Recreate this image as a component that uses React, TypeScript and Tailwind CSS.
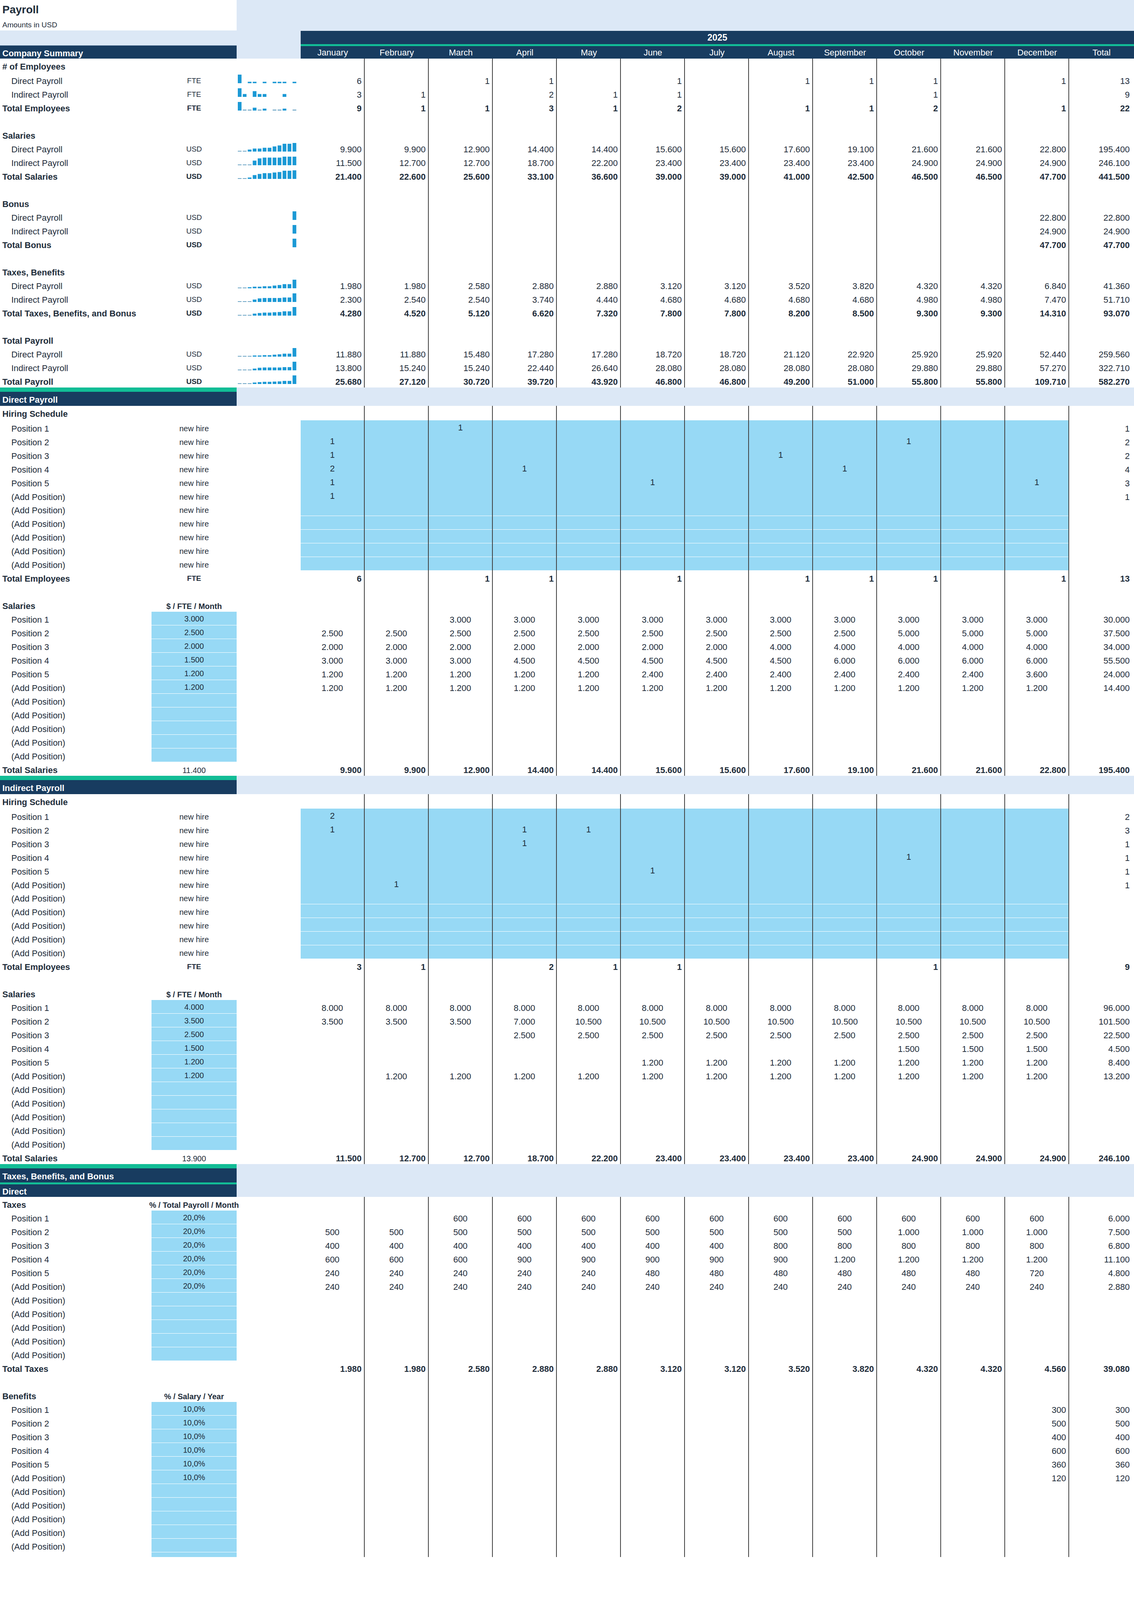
import React from 'react';

type Align = 'r' | 'c';
type UnitKind = 'u' | 'ub' | 'nh' | 'hd' | 'in' | 'tv' | 'none';

interface RowDef {
  label?: string;
  indent?: boolean;
  bold?: boolean;
  unit?: string;
  unitKind?: UnitKind;
  months?: string[];
  align?: Align;
  monthBlue?: boolean;
  monthBold?: boolean;
  total?: string;
  spark?: boolean;
  h?: 'h-[35px]' | 'h-[37px]' | 'h-[12px]';
  partial?: boolean;
}

const E12: string[] = Array(12).fill('');
const at = (m: Record<number, string>): string[] => E12.map((_, i) => m[i] ?? '');
const rep = (...parts: [number, string][]): string[] => parts.flatMap(([n, v]) => Array(n).fill(v) as string[]);
const P = (s: string): string[] => s.split('|');

const MONTHS = ['January', 'February', 'March', 'April', 'May', 'June', 'July', 'August', 'September', 'October', 'November', 'December', 'Total'];

const positions = [
  'Position 1',
  'Position 2',
  'Position 3',
  'Position 4',
  'Position 5',
  '(Add Position)',
  '(Add Position)',
  '(Add Position)',
  '(Add Position)',
  '(Add Position)',
  '(Add Position)',
];

const toNum = (v: string): number => (v ? parseFloat(v.replace(/\./g, '').replace(',', '.')) : 0);

function Spark({ months }: { months: string[] }) {
  const vals = months.map(toNum);
  const min = Math.min(...vals);
  const max = Math.max(...vals);
  return (
    <svg width="164" height="35" viewBox="0 0 164 35" className="block">
      {vals.map((v, i) => {
        if (v === 0) return null;
        let h = max === min ? 22 : ((v - min) / (max - min)) * 22;
        h = Math.max(h, 2);
        const x = 3 + i * 12.75;
        return <rect key={i} x={x} y={26 - h} width={9.5} height={h} fill={h <= 2.5 ? '#6ea6c6' : '#1b99d5'} />;
      })}
    </svg>
  );
}

function UnitCell({ unit, kind, partial }: { unit?: string; kind?: UnitKind; partial?: boolean }) {
  if (partial) return <div className="bg-[#97d9f5]" />;
  if (kind === 'in') {
    return (
      <div className="flex flex-col">
        <div className="flex-1 mb-[3px] bg-[#97d9f5] flex items-center justify-center pt-[2px] text-[20px]">{unit}</div>
      </div>
    );
  }
  if (kind === 'hd') {
    return <div className="flex items-center justify-center pt-[4px] text-[20px] font-bold whitespace-nowrap">{unit}</div>;
  }
  if (kind === 'nh') {
    return <div className="flex items-center justify-center pt-[3px] text-[20px]">{unit}</div>;
  }
  if (kind === 'ub') {
    return <div className="flex items-center justify-center pt-[4px] text-[19px] font-bold">{unit}</div>;
  }
  if (kind === 'tv') {
    return <div className="flex items-center justify-center pt-[4px] text-[20px]">{unit}</div>;
  }
  if (kind === 'u') {
    return <div className="flex items-center justify-center pt-[4px] text-[19px]">{unit}</div>;
  }
  return <div />;
}

function MonthCell({ v, blue, align, bold, partial }: { v: string; blue?: boolean; align?: Align; bold?: boolean; partial?: boolean }) {
  if (partial) return <div className="border-r-2 border-[#3f3f3f]" />;
  if (blue) {
    return (
      <div className="border-r-2 border-[#3f3f3f] flex flex-col">
        <div className="flex-1 mb-[3px] bg-[#97d9f5] flex items-center justify-center pt-[2px]">{v}</div>
      </div>
    );
  }
  return (
    <div
      className={`border-r-2 border-[#3f3f3f] flex items-center pt-[4px] ${align === 'c' ? 'justify-center' : 'justify-end pr-[6px]'} ${
        bold ? 'font-bold' : ''
      }`}
    >
      {v}
    </div>
  );
}

function Row(r: RowDef) {
  const months = r.months ?? E12;
  return (
    <div className={`grid grid-cols-[388px_218px_164px_repeat(12,164px)_166px] ${r.h ?? 'h-[35px]'} text-[22px]`}>
      <div className={`flex items-center pt-[4px] whitespace-nowrap ${r.indent ? 'pl-[29px]' : 'pl-[6px]'} ${r.bold ? 'font-bold' : ''}`}>
        {r.label}
      </div>
      <UnitCell unit={r.unit} kind={r.unitKind} partial={r.partial} />
      <div>{r.spark ? <Spark months={months} /> : null}</div>
      {months.map((v, i) => (
        <MonthCell key={i} v={v} blue={r.monthBlue} align={r.align} bold={r.monthBold} partial={r.partial} />
      ))}
      <div className={`flex items-center justify-end pr-[11px] pt-[4px] ${r.monthBold ? 'font-bold' : ''}`}>{r.total}</div>
    </div>
  );
}

function SectionHeader({ title }: { title: string }) {
  return (
    <div className="flex">
      <div className="w-[606px] flex flex-col">
        <div className="h-[11px] bg-[#12bd96]" />
        <div className="h-[36px] bg-[#183c60] text-white font-bold text-[22px] flex items-center pl-[6px] pt-[5px]">{title}</div>
      </div>
      <div className="flex-1 bg-[#dce8f6]" />
    </div>
  );
}

function TaxesHeader() {
  return (
    <div className="flex">
      <div className="w-[606px] flex flex-col">
        <div className="h-[11px] bg-[#12bd96]" />
        <div className="h-[36px] bg-[#183c60] text-white font-bold text-[22px] flex items-center pl-[6px] pt-[5px]">
          Taxes, Benefits, and Bonus
        </div>
        <div className="h-[5px] bg-[#12bd96]" />
        <div className="h-[32px] bg-[#183c60] text-white font-bold text-[22px] flex items-center pl-[6px] pt-[5px]">Direct</div>
      </div>
      <div className="flex-1 bg-[#dce8f6]" />
    </div>
  );
}

// ---------- Summary ----------
const summary: RowDef[] = [
  { label: '# of Employees', bold: true, h: 'h-[37px]' },
  { label: 'Direct Payroll', indent: true, unit: 'FTE', unitKind: 'u', spark: true, months: at({ 0: '6', 2: '1', 3: '1', 5: '1', 7: '1', 8: '1', 9: '1', 11: '1' }), total: '13' },
  { label: 'Indirect Payroll', indent: true, unit: 'FTE', unitKind: 'u', spark: true, months: at({ 0: '3', 1: '1', 3: '2', 4: '1', 5: '1', 9: '1' }), total: '9' },
  { label: 'Total Employees', bold: true, unit: 'FTE', unitKind: 'ub', spark: true, monthBold: true, months: at({ 0: '9', 1: '1', 2: '1', 3: '3', 4: '1', 5: '2', 7: '1', 8: '1', 9: '2', 11: '1' }), total: '22' },
  {},
  { label: 'Salaries', bold: true },
  { label: 'Direct Payroll', indent: true, unit: 'USD', unitKind: 'u', spark: true, months: P('9.900|9.900|12.900|14.400|14.400|15.600|15.600|17.600|19.100|21.600|21.600|22.800'), total: '195.400' },
  { label: 'Indirect Payroll', indent: true, unit: 'USD', unitKind: 'u', spark: true, months: P('11.500|12.700|12.700|18.700|22.200|23.400|23.400|23.400|23.400|24.900|24.900|24.900'), total: '246.100' },
  { label: 'Total Salaries', bold: true, unit: 'USD', unitKind: 'ub', spark: true, monthBold: true, months: P('21.400|22.600|25.600|33.100|36.600|39.000|39.000|41.000|42.500|46.500|46.500|47.700'), total: '441.500' },
  {},
  { label: 'Bonus', bold: true },
  { label: 'Direct Payroll', indent: true, unit: 'USD', unitKind: 'u', spark: true, months: at({ 11: '22.800' }), total: '22.800' },
  { label: 'Indirect Payroll', indent: true, unit: 'USD', unitKind: 'u', spark: true, months: at({ 11: '24.900' }), total: '24.900' },
  { label: 'Total Bonus', bold: true, unit: 'USD', unitKind: 'ub', spark: true, monthBold: true, months: at({ 11: '47.700' }), total: '47.700' },
  {},
  { label: 'Taxes, Benefits', bold: true },
  { label: 'Direct Payroll', indent: true, unit: 'USD', unitKind: 'u', spark: true, months: P('1.980|1.980|2.580|2.880|2.880|3.120|3.120|3.520|3.820|4.320|4.320|6.840'), total: '41.360' },
  { label: 'Indirect Payroll', indent: true, unit: 'USD', unitKind: 'u', spark: true, months: P('2.300|2.540|2.540|3.740|4.440|4.680|4.680|4.680|4.680|4.980|4.980|7.470'), total: '51.710' },
  { label: 'Total Taxes, Benefits, and Bonus', bold: true, unit: 'USD', unitKind: 'ub', spark: true, monthBold: true, months: P('4.280|4.520|5.120|6.620|7.320|7.800|7.800|8.200|8.500|9.300|9.300|14.310'), total: '93.070' },
  {},
  { label: 'Total Payroll', bold: true },
  { label: 'Direct Payroll', indent: true, unit: 'USD', unitKind: 'u', spark: true, months: P('11.880|11.880|15.480|17.280|17.280|18.720|18.720|21.120|22.920|25.920|25.920|52.440'), total: '259.560' },
  { label: 'Indirect Payroll', indent: true, unit: 'USD', unitKind: 'u', spark: true, months: P('13.800|15.240|15.240|22.440|26.640|28.080|28.080|28.080|28.080|29.880|29.880|57.270'), total: '322.710' },
  { label: 'Total Payroll', bold: true, unit: 'USD', unitKind: 'ub', spark: true, monthBold: true, months: P('25.680|27.120|30.720|39.720|43.920|46.800|46.800|49.200|51.000|55.800|55.800|109.710'), total: '582.270' },
];

// ---------- Payroll sections ----------
function payrollRows(
  hire: string[][],
  hireTot: string[],
  empTotal: string[],
  empSum: string,
  sal: string[],
  salM: string[][],
  salTot: string[],
  salUnitTotal: string,
  salTotals: string[],
  salSum: string
): RowDef[] {
  return [
    { label: 'Hiring Schedule', bold: true, h: 'h-[37px]' },
    ...positions.map((p, i) => ({
      label: p,
      indent: true,
      unit: 'new hire',
      unitKind: 'nh' as UnitKind,
      months: hire[i] ?? E12,
      monthBlue: true,
      total: hireTot[i] ?? '',
    })),
    { label: 'Total Employees', bold: true, unit: 'FTE', unitKind: 'ub', months: empTotal, monthBold: true, total: empSum },
    {},
    { label: 'Salaries', bold: true, unit: '$ / FTE / Month', unitKind: 'hd' },
    ...positions.map((p, i) => ({
      label: p,
      indent: true,
      unit: sal[i] ?? '',
      unitKind: 'in' as UnitKind,
      months: salM[i] ?? E12,
      align: 'c' as Align,
      total: salTot[i] ?? '',
    })),
    { label: 'Total Salaries', bold: true, unit: salUnitTotal, unitKind: 'tv', months: salTotals, monthBold: true, total: salSum },
  ];
}

const directRows = payrollRows(
  [at({ 2: '1' }), at({ 0: '1', 9: '1' }), at({ 0: '1', 7: '1' }), at({ 0: '2', 3: '1', 8: '1' }), at({ 0: '1', 5: '1', 11: '1' }), at({ 0: '1' })],
  ['1', '2', '2', '4', '3', '1'],
  at({ 0: '6', 2: '1', 3: '1', 5: '1', 7: '1', 8: '1', 9: '1', 11: '1' }),
  '13',
  ['3.000', '2.500', '2.000', '1.500', '1.200', '1.200'],
  [
    rep([2, ''], [10, '3.000']),
    rep([9, '2.500'], [3, '5.000']),
    rep([7, '2.000'], [5, '4.000']),
    rep([3, '3.000'], [5, '4.500'], [4, '6.000']),
    rep([5, '1.200'], [6, '2.400'], [1, '3.600']),
    rep([12, '1.200']),
  ],
  ['30.000', '37.500', '34.000', '55.500', '24.000', '14.400'],
  '11.400',
  P('9.900|9.900|12.900|14.400|14.400|15.600|15.600|17.600|19.100|21.600|21.600|22.800'),
  '195.400'
);

const indirectRows = payrollRows(
  [at({ 0: '2' }), at({ 0: '1', 3: '1', 4: '1' }), at({ 3: '1' }), at({ 9: '1' }), at({ 5: '1' }), at({ 1: '1' })],
  ['2', '3', '1', '1', '1', '1'],
  at({ 0: '3', 1: '1', 3: '2', 4: '1', 5: '1', 9: '1' }),
  '9',
  ['4.000', '3.500', '2.500', '1.500', '1.200', '1.200'],
  [
    rep([12, '8.000']),
    rep([3, '3.500'], [1, '7.000'], [8, '10.500']),
    rep([3, ''], [9, '2.500']),
    rep([9, ''], [3, '1.500']),
    rep([5, ''], [7, '1.200']),
    rep([1, ''], [11, '1.200']),
  ],
  ['96.000', '101.500', '22.500', '4.500', '8.400', '13.200'],
  '13.900',
  P('11.500|12.700|12.700|18.700|22.200|23.400|23.400|23.400|23.400|24.900|24.900|24.900'),
  '246.100'
);

const taxM = [
  rep([2, ''], [10, '600']),
  rep([9, '500'], [3, '1.000']),
  rep([7, '400'], [5, '800']),
  rep([3, '600'], [5, '900'], [4, '1.200']),
  rep([5, '240'], [6, '480'], [1, '720']),
  rep([12, '240']),
];
const taxTot = ['6.000', '7.500', '6.800', '11.100', '4.800', '2.880'];
const benDec = ['300', '500', '400', '600', '360', '120'];

const taxRows: RowDef[] = [
  { label: 'Taxes', bold: true, unit: '% / Total Payroll / Month', unitKind: 'hd' },
  ...positions.map((p, i) => ({
    label: p,
    indent: true,
    unit: i < 6 ? '20,0%' : '',
    unitKind: 'in' as UnitKind,
    months: taxM[i] ?? E12,
    align: 'c' as Align,
    total: taxTot[i] ?? '',
  })),
  {
    label: 'Total Taxes',
    bold: true,
    months: P('1.980|1.980|2.580|2.880|2.880|3.120|3.120|3.520|3.820|4.320|4.320|4.560'),
    monthBold: true,
    total: '39.080',
  },
  {},
  { label: 'Benefits', bold: true, unit: '% / Salary / Year', unitKind: 'hd' },
  ...positions.map((p, i) => ({
    label: p,
    indent: true,
    unit: i < 6 ? '10,0%' : '',
    unitKind: 'in' as UnitKind,
    months: i < 6 ? at({ 11: benDec[i] }) : E12,
    align: 'r' as Align,
    total: benDec[i] ?? '',
  })),
  { partial: true, h: 'h-[12px]' },
];

export default function App() {
  return (
    <div className="w-[2904px] bg-white text-[#1e2c3a] font-['Liberation_Sans',Arial,sans-serif]">
      {/* Header */}
      <div className="flex h-[150px]">
        <div className="w-[606px] flex flex-col">
          <div className="h-[50px] flex items-center pl-[6px] text-[28px] font-bold">Payroll</div>
          <div className="h-[28px] flex items-center pl-[6px] text-[19px]">Amounts in USD</div>
          <div className="h-[38px] bg-[#dce8f6]" />
          <div className="h-[34px] bg-[#183c60] border-t border-[#6a88a6] text-white font-bold text-[22px] flex items-center pl-[6px] pt-[5px]">
            Company Summary
          </div>
        </div>
        <div className="w-[164px] bg-[#dce8f6]" />
        <div className="flex-1 flex flex-col">
          <div className="h-[79px] bg-[#dce8f6]" />
          <div className="h-[34px] bg-[#183c60] text-white font-bold text-[23px] flex items-center justify-center">2025</div>
          <div className="h-[5px] bg-[#12bd96]" />
          <div className="h-[32px] bg-[#183c60] grid grid-cols-[repeat(12,164px)_166px] text-white text-[22px]">
            {MONTHS.map((m) => (
              <div key={m} className="flex items-center justify-center">
                {m}
              </div>
            ))}
          </div>
        </div>
      </div>

      {summary.map((r, i) => (
        <Row key={`s${i}`} {...r} />
      ))}

      <SectionHeader title="Direct Payroll" />
      {directRows.map((r, i) => (
        <Row key={`d${i}`} {...r} />
      ))}

      <SectionHeader title="Indirect Payroll" />
      {indirectRows.map((r, i) => (
        <Row key={`i${i}`} {...r} />
      ))}

      <TaxesHeader />
      {taxRows.map((r, i) => (
        <Row key={`t${i}`} {...r} />
      ))}
    </div>
  );
}
